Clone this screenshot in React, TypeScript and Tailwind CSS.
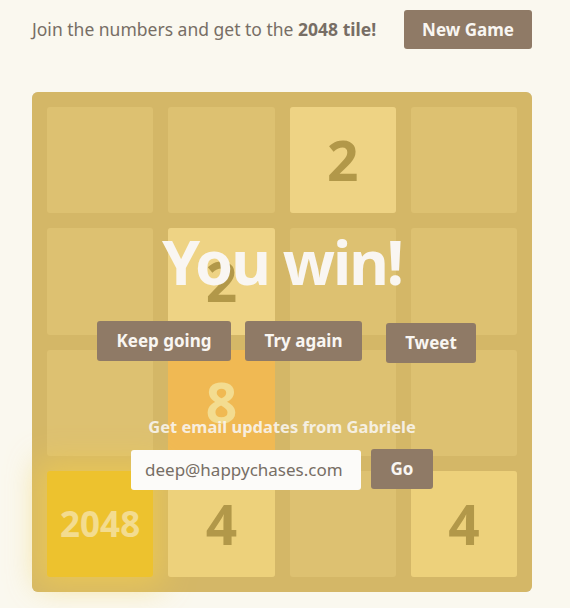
const cells: (number | null)[] = [
  null, null, 2, null,
  null, 2, null, null,
  null, 8, null, null,
  2048, 4, null, 4,
];

const tileStyle: Record<number, string> = {
  2: "bg-[#eee4da] text-[#776e65] text-[55px]",
  4: "bg-[#ede0c8] text-[#776e65] text-[55px]",
  8: "bg-[#f2b179] text-[#f9f6f2] text-[55px]",
  2048: "bg-[#edc22e] text-[#f9f6f2] text-[35px] shadow-[0_0_30px_10px_rgba(243,215,116,0.7)]",
};

const font = { fontFamily: '"Noto Sans", "Open Sans", sans-serif' };

export default function App() {
  return (
    <div className="min-h-[608px] w-[570px] bg-[#faf8ef] text-[#776e65]" style={font}>
      <div className="flex items-center justify-between pl-8 pr-[38px] pt-[10px]">
        <p className="text-[17.5px] leading-[39px]">
          Join the numbers and get to the <strong className="font-bold">2048 tile!</strong>
        </p>
        <button className="h-[39px] w-[128px] rounded-[3px] bg-[#8f7a66] text-[17px] font-bold text-[#f9f6f2]">
          New Game
        </button>
      </div>

      <div className="relative ml-8 mt-[43px] h-[500px] w-[500px] rounded-[6px] bg-[#bbada0] p-[15px]">
        <div className="grid h-full grid-cols-4 grid-rows-4 gap-[15px]">
          {cells.map((v, i) => (
            <div key={i} className="rounded-[3px] bg-[rgba(238,228,218,0.35)]">
              {v !== null && (
                <div
                  className={`flex h-full w-full items-center justify-center rounded-[3px] font-bold ${tileStyle[v]}`}
                >
                  {v}
                </div>
              )}
            </div>
          ))}
        </div>

        <div className="absolute inset-0 flex flex-col rounded-[6px] bg-[rgba(237,194,46,0.5)] text-[#f9f6f2]">
          <p className="mt-[140px] text-center text-[61px] font-bold leading-[60px] tracking-[-2px]">You win!</p>

          <div className="mt-[29px] flex items-start pl-[65px]">
            <button className="h-[40px] w-[134px] rounded-[3px] bg-[#8f7a66] text-[17px] font-bold">
              Keep going
            </button>
            <button className="ml-[14px] h-[40px] w-[117px] rounded-[3px] bg-[#8f7a66] text-[17px] font-bold">
              Try again
            </button>
            <button className="ml-[24px] mt-[2px] h-[40px] w-[90px] rounded-[3px] bg-[#8f7a66] text-[17px] font-bold">
              Tweet
            </button>
          </div>

          <p className="mt-[52px] text-center text-[16.5px] font-bold leading-[24px] text-[rgba(249,246,242,0.88)]">
            Get email updates from Gabriele
          </p>
          <div className="mt-[10px] flex items-start justify-center gap-[10px]">
            <div className="mt-[1px] flex h-[40px] w-[230px] items-center rounded-[3px] bg-[#fcfbf9] px-[14px] text-[17px] text-[#776e65]">
              deep@happychases.com
            </div>
            <button className="h-[40px] w-[62px] rounded-[3px] bg-[#8f7a66] text-[17px] font-bold">
              Go
            </button>
          </div>
        </div>
      </div>
    </div>
  );
}
